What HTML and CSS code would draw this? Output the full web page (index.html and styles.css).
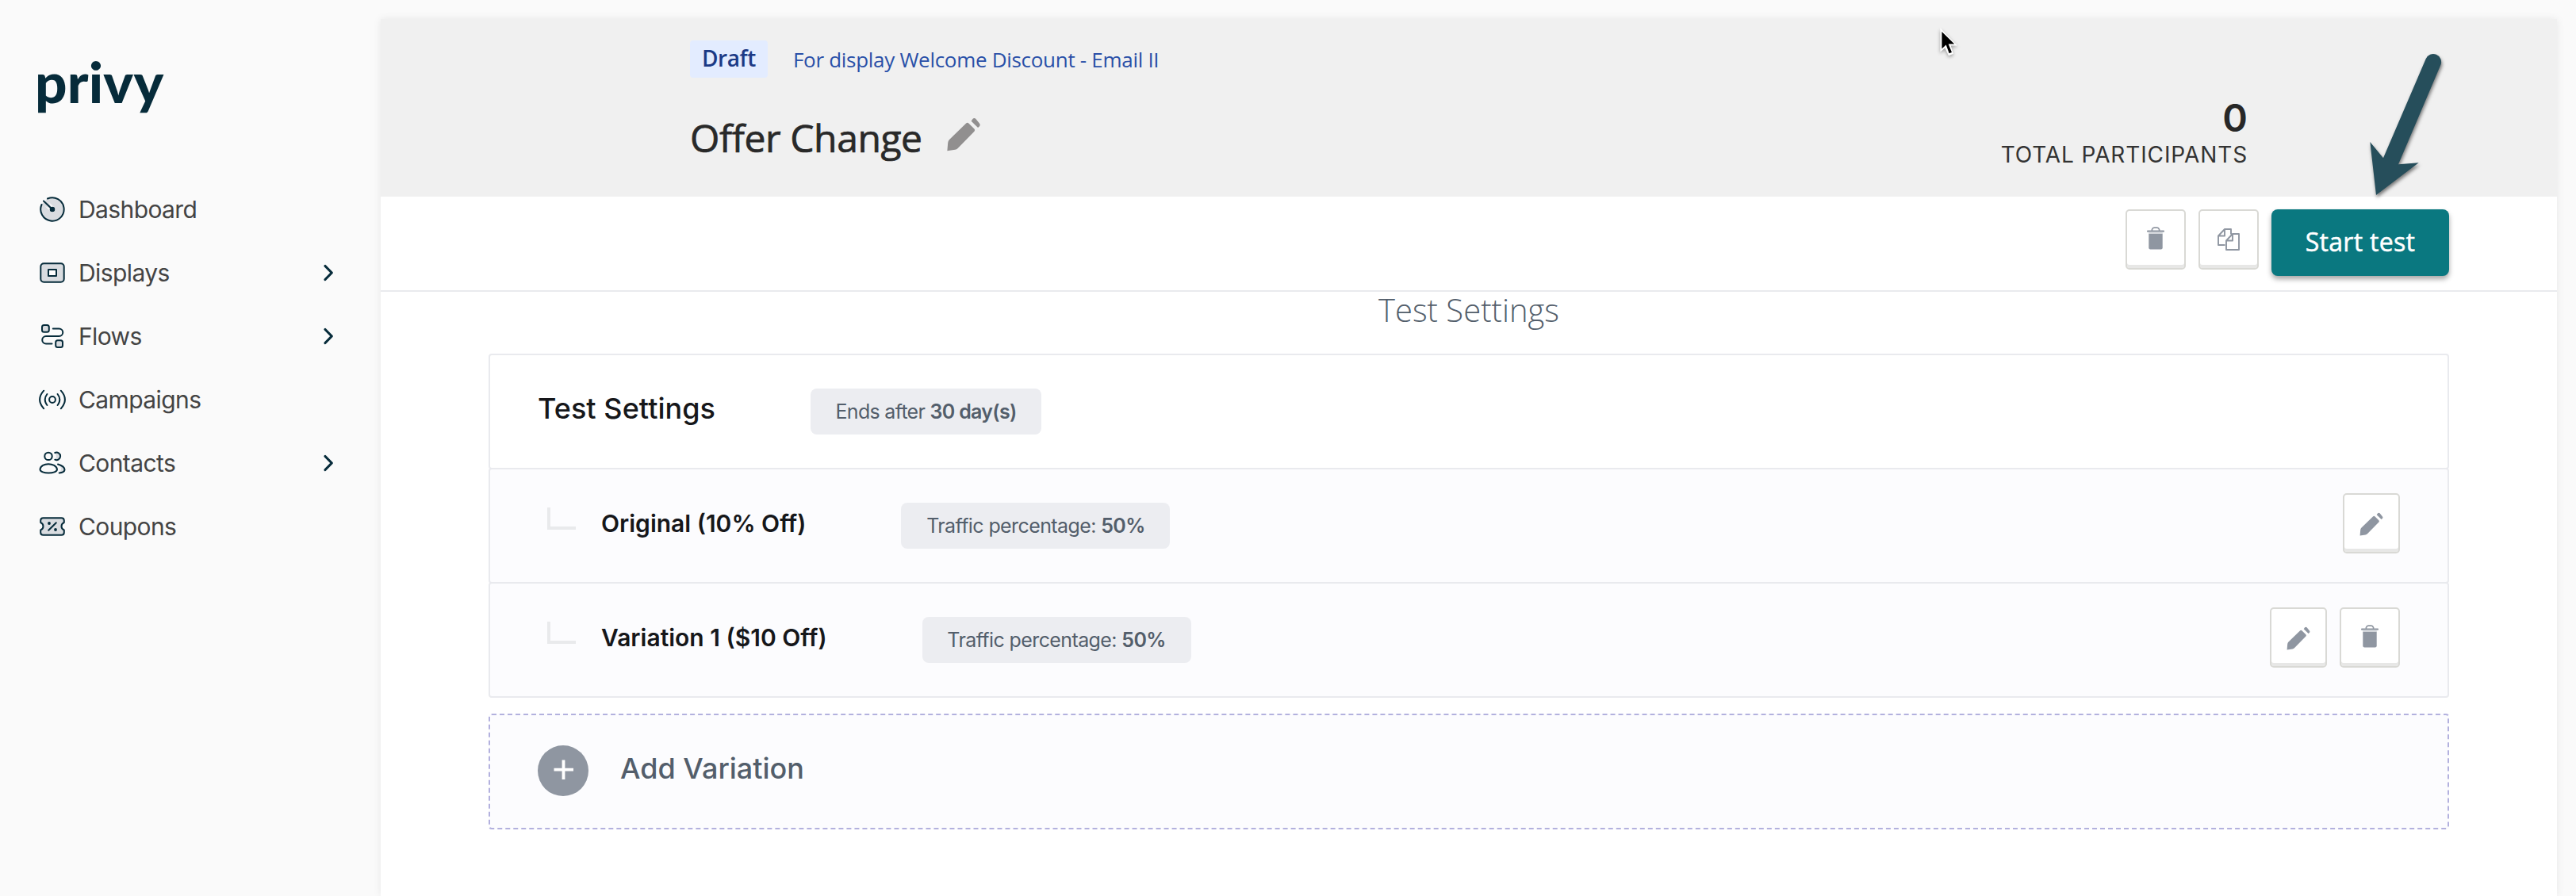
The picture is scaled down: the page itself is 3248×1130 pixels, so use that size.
FILE: index.html
```html
<!DOCTYPE html>
<html lang="en">
<head>
<meta charset="utf-8">
<title>Privy - Offer Change</title>
<link rel="stylesheet" href="styles.css">
</head>
<body>
<svg class="defs" aria-hidden="true">
  <symbol id="chevron" viewBox="0 0 16 24"><path d="M4 3.500 12.300 12 4 20.500" fill="none" stroke="#062b3a" stroke-width="3.200" stroke-linecap="round" stroke-linejoin="round"/></symbol>
  <symbol id="pencil" viewBox="0 0 30 30"><path d="M.6 29.400 1.200 22.300Q1.400 20.700 2.500 19.500L17.200 5.300Q18.400 4.200 19.600 5.400L24.400 10.200Q25.400 11.300 24.400 12.400L9.900 27.200Q8.900 28.200 7.500 28.500ZM21.700 3.300 23.100 1.300Q24.300.2 25.600 1.300L29 5.400Q30 6.800 29 7.800L27.600 9Z" fill="currentColor"/></symbol>
  <symbol id="trash" viewBox="0 0 22 29"><path d="M6.400 5V3.500Q7.300 1.200 9 1.200H13Q14.700 1.200 15.600 3.500V5" fill="none" stroke="currentColor" stroke-width="1.700"/><rect y="4.500" width="22" height="2.200" rx="1" fill="currentColor"/><path d="M2.300 8.500H19.700V26.500Q19.700 28.500 17.700 28.500H4.300Q2.300 28.500 2.300 26.500Z" fill="currentColor"/><path d="M2.300 6.700H19.700V8.500H2.300Z" fill="#d9dce0"/></symbol>
</svg>
<div class="app">
  <aside class="sidebar">
    <div class="logo">privy</div>
    <nav class="nav">
      <a class="nav-item"><svg class="nav-icon" viewBox="-18 -18 36 36"><circle r="14.500" fill="#d9dce0" stroke="none"/><path d="M-11-10.500 0 0" stroke="#fafafa" stroke-width="7"/><path d="M0 0-6.500-13-14-6Z" fill="#d9dce0" stroke="none"/><path d="M-6-13.500A14.700 14.700 0 1 1-13.500-6M-11-10.500 0 0"/><circle r="2.300" fill="#062b3a"/></svg><span class="nav-label">Dashboard</span></a>
      <a class="nav-item"><svg class="nav-icon" viewBox="-18 -18 36 36"><rect x="-14.700" y="-11.700" width="29.400" height="23.400" rx="4" fill="#d9dce0"/><rect x="-5" y="-4" width="10" height="8" fill="#fff"/></svg><span class="nav-label">Displays</span><svg class="chevron"><use href="#chevron"/></svg></a>
      <a class="nav-item"><svg class="nav-icon" viewBox="-18 -18 36 36"><rect x="-13" y="-14" width="8.800" height="8.800" rx="2.500" fill="#d9dce0"/><rect x="4.200" y="5.200" width="8.800" height="8.800" rx="2.500" fill="#d9dce0"/><path d="M.8-9.500H8.500A4.750 4.750 0 0 1 8.500 0H-8A4.750 4.750 0 0 0-8 9.500H-.5"/></svg><span class="nav-label">Flows</span><svg class="chevron"><use href="#chevron"/></svg></a>
      <a class="nav-item"><svg class="nav-icon" viewBox="-18 -18 36 36"><circle r="3.900"/><path d="M-6.600-7Q-12 0-6.600 7M6.600-7Q12 0 6.600 7M-10.800-11.300Q-21 0-10.800 11.300M10.800-11.300Q21 0 10.800 11.300"/></svg><span class="nav-label">Campaigns</span></a>
      <a class="nav-item"><svg class="nav-icon" viewBox="-18 -18 36 36"><path d="M3-13Q10.200-14 10.200-8.600T3-4Q7-8 3-13M7 1.500Q15.500 4 15.500 8.500 15 12 8.700 12.500 14 6 7 1.500" fill="#d9dce0" stroke="none"/><circle cx="-5" cy="-8.600" r="4.700"/><path d="M-15.500 8C-15 3.500-10 1.200-5 1.200S5.500 3.500 6 8C6 14-15.500 14-15.500 8ZM3.300-13A4.800 4.800 0 1 1 3.300-4.300M7 1.500Q15.500 4 15.500 8.500 15 12 8.700 12.500"/></svg><span class="nav-label">Contacts</span><svg class="chevron"><use href="#chevron"/></svg></a>
      <a class="nav-item"><svg class="nav-icon" viewBox="-18 -18 36 36"><path d="M-11.500-10.800H11.500Q14.800-10.800 14.800-7.500V-5A5 5 0 0 0 14.800 4.400V7.500Q14.800 10.800 11.500 10.800H-11.500Q-14.800 10.800-14.800 7.500V4.400A5 5 0 0 0-14.800-5V-7.500Q-14.800-10.800-11.500-10.800Z" fill="#d9dce0"/><path d="M4.800-4.800-4.800 4.800"/><circle cx="-4" cy="-4" r=".9" fill="#062b3a"/><circle cx="4" cy="4" r=".9" fill="#062b3a"/></svg><span class="nav-label">Coupons</span></a>
    </nav>
  </aside>

  <main class="panel">
    <header class="header">
      <div class="summary">
        <div class="meta"><span class="badge">Draft</span><a class="display-link">For display Welcome Discount - Email II</a></div>
        <div class="title-row"><h1 class="title">Offer Change</h1><svg class="title-pencil"><use href="#pencil"/></svg></div>
      </div>
      <div class="stat"><div class="stat-value">0</div><div class="stat-label">TOTAL PARTICIPANTS</div></div>
    </header>

    <div class="toolbar">
      <button class="icon-button wide"><svg class="icon-trash"><use href="#trash"/></svg></button>
      <button class="icon-button wide"><svg class="icon-copy" viewBox="0 0 28 28"><path d="M9.500 21H1V9.500L9 1H17V7.500M9 1V9.500H1M19 7H27V27H11V15.500L19 7V15.500H11" fill="none" stroke="currentColor" stroke-width="1.900" stroke-linejoin="round"/></svg></button>
      <button class="start-button">Start test</button>
    </div>

    <section class="content">
      <h2 class="heading">Test Settings</h2>
      <div class="card">
        <div class="row row-main"><h3 class="row-title">Test Settings</h3><span class="pill">Ends after <b>30 day(s)</b></span></div>
        <div class="row"><span class="branch"></span><h4 class="row-name">Original (10% Off)</h4><span class="pill pill-traffic">Traffic percentage: <b>50%</b></span>
          <div class="actions"><button class="icon-button"><svg class="icon-pencil"><use href="#pencil"/></svg></button></div></div>
        <div class="row"><span class="branch"></span><h4 class="row-name">Variation 1 ($10 Off)</h4><span class="pill pill-traffic">Traffic percentage: <b>50%</b></span>
          <div class="actions"><button class="icon-button"><svg class="icon-pencil"><use href="#pencil"/></svg></button><button class="icon-button wide"><svg class="icon-trash"><use href="#trash"/></svg></button></div></div>
      </div>
      <div class="add-row"><svg class="add-icon" viewBox="0 0 64 64"><circle cx="32" cy="32" r="32" fill="#8f96a1"/><path d="M32.500 18.500V43M20.500 30.700H45" stroke="#fff" stroke-width="3.800"/></svg><span class="add-label">Add Variation</span></div>
    </section>
  </main>
</div>

<svg class="arrow" viewBox="0 0 540 630"><path d="M168 588 145 387 195 448 356 73A30 30 0 0 1 412 96L252 472 329 466Z" fill="#264e5b"/></svg>
<svg class="cursor" viewBox="0 0 75 115"><path d="M4 4V95L22 80 36 110 54 102 44 71H69Z" fill="#fff"/><path d="M10 18V83L26 68 38 101 48 97 35 65H58Z"/></svg>
</body>
</html>
```
FILE: styles.css
```css
* { box-sizing: border-box; }
body { margin: 0; background: #fafafa; font-family: Inter, "Liberation Sans", sans-serif; }
h1, h2, h3, h4 { margin: 0; }
button { font: inherit; padding: 0; }
.defs { position: absolute; width: 0; height: 0; }

.app { display: flex; height: 1130px; overflow: hidden; }

/* Sidebar */
.sidebar { flex: 0 0 480px; padding: 64px 0 0 48px; }
.logo { height: 80px; margin-left: -4px; font: 900 71px/78px Lato, sans-serif; color: #062b3a; letter-spacing: .2px; }
.nav { margin-top: 80px; }
.nav-item { display: flex; align-items: center; height: 80px; padding-right: 58px; }
.nav-icon { width: 36px; height: 36px; margin-right: 15px; fill: none; stroke: #062b3a; stroke-width: 2; stroke-linecap: round; stroke-linejoin: round; }
.nav-label { flex: 1; padding-bottom: 1px; font-size: 30px; letter-spacing: -0.6px; color: #444; }
.chevron { width: 16px; height: 24px; }

/* Main panel */
.panel { flex: 0 0 2744px; margin-top: 24px; background: #fff; box-shadow: 0 0 10px rgba(0, 0, 0, .08); }
.header { display: flex; justify-content: space-between; height: 224px; padding: 27px 390px 0 390px; background: #f0f0f0; }
.meta { display: flex; align-items: center; gap: 32px; height: 47px; font-family: "Open Sans", "Noto Sans", sans-serif; }
.badge { width: 98px; height: 47px; border-radius: 4px; background: #e3ecff; color: #1c3a86; font-size: 28px; font-weight: 600; line-height: 45px; letter-spacing: -0.4px; text-align: center; }
.display-link { padding-top: 1px; color: #2a50a8; font-size: 26px; line-height: 47px; letter-spacing: -0.3px; }
.title-row { display: flex; margin-top: 42px; }
.title { height: 66px; padding-top: 2px; font: 500 48px/64px "Open Sans", "Noto Sans", sans-serif; letter-spacing: -0.4px; color: #292929; -webkit-text-stroke: .7px #292929; }
.title-pencil { width: 44px; height: 43px; margin: 8px 0 0 30px; color: #918f8f; }
.stat { padding-top: 71px; text-align: right; }
.stat-value { color: #272727; font-size: 48px; font-weight: 600; line-height: 53px; }
.stat-label { color: #333; font-size: 28px; line-height: 40px; letter-spacing: .88px; }

/* Toolbar */
.toolbar { display: flex; justify-content: flex-end; gap: 16px; height: 120px; padding: 16px 136px 0 0; border-bottom: 2px solid #e9eaee; }
.icon-button { display: flex; align-items: center; justify-content: center; width: 72px; height: 76px; border: 2px solid #d9d9d5; border-radius: 5px; background: #fff; box-shadow: inset 0 -4px #e7e7e6; color: #8f96a1; }
.icon-button.wide { width: 76px; }
.icon-trash { width: 22px; height: 29px; margin-bottom: 4px; }
.icon-copy { width: 28px; height: 28px; }
.icon-pencil { width: 30px; height: 30px; margin-top: 2px; }
.start-button { width: 224px; height: 84px; padding-bottom: 2px; border: 0; border-radius: 8px; background: #0a7880; box-shadow: 0 4px 6px rgba(0, 0, 0, .35); color: #fff; font: 500 32px/40px "Open Sans", "Noto Sans", sans-serif; letter-spacing: .3px; -webkit-text-stroke: .5px #fff; }

/* Test settings */
.content { padding: 0 136px; }
.heading { height: 42px; padding-top: 1px; margin-bottom: 36px; text-align: center; font: 300 40px/43px "Open Sans", "Noto Sans", sans-serif; color: #535e6b; }
.row { display: flex; align-items: center; height: 146px; margin-top: -2px; padding: 0 60px 0 72px; border: 2px solid #e9eaee; border-radius: 4px; background: #fcfcfe; }
.row-main { margin-top: 0; padding-left: 60px; background: #fff; }
.row-title { margin-right: 120px; padding-bottom: 8px; font-size: 36px; font-weight: 500; letter-spacing: .05px; color: #16171a; }
.branch { width: 36px; height: 28px; margin: 0 32px 18px 0; border: solid #e9eaec; border-width: 0 0 4px 4px; }
.row-name { margin-right: 120px; padding-bottom: 6px; font-size: 30px; font-weight: 600; color: #16171a; }
.pill { width: 291px; height: 58px; border-radius: 8px; background: #ecedf1; color: #535e6b; font-size: 25px; line-height: 58px; letter-spacing: -0.7px; text-align: center; white-space: nowrap; }
.pill b { font-weight: 600; }
.pill-traffic { width: 339px; letter-spacing: -0.6px; }
.actions { display: flex; gap: 16px; margin: 0 0 6px auto; }
.add-row { display: flex; align-items: center; height: 146px; margin-top: 20px; padding: 0 60px 2px; border: 2px dashed #b3b1de; border-radius: 4px; background: #fcfcfe; }
.add-icon { width: 64px; height: 64px; margin-right: 40px; }
.add-label { padding-bottom: 6px; font-size: 36px; font-weight: 500; color: #535e6b; }

/* Annotations lying over the page */
.arrow { position: absolute; left: 2940px; top: 50px; width: 180px; height: 210px; filter: drop-shadow(1px 3px 2px rgba(0, 0, 0, .5)); }
.cursor { position: absolute; left: 2445px; top: 34px; width: 25px; height: 38px; filter: drop-shadow(0 2px 2px rgba(0, 0, 0, .35)); }
```
